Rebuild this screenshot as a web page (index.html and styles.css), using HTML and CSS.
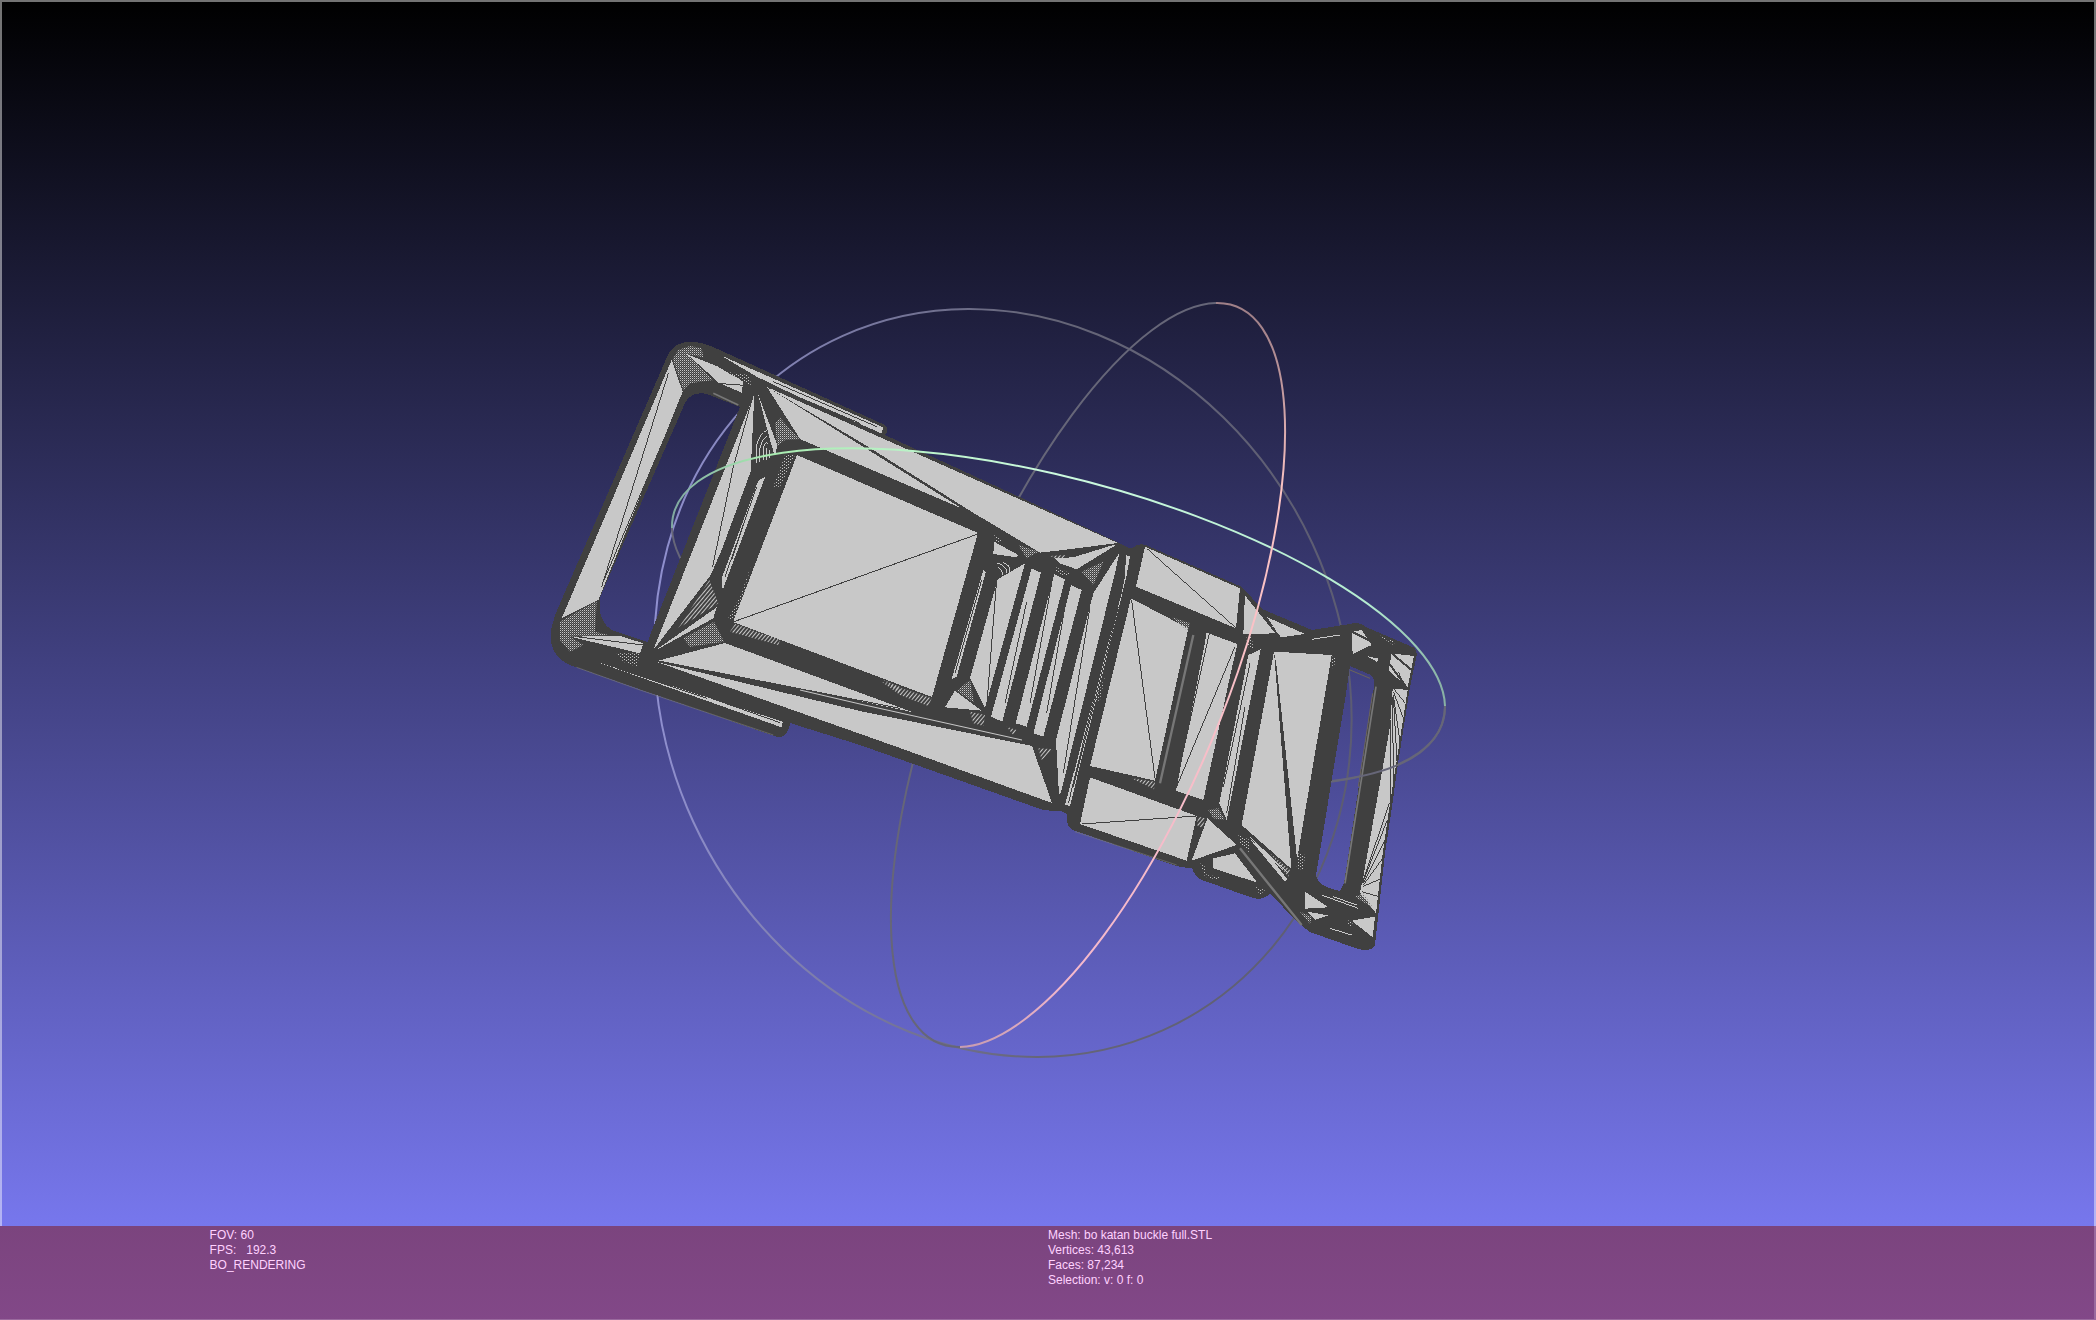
FILE: index.html
```html
<!DOCTYPE html>
<html lang="en">
<head>
    <meta charset="UTF-8">
    <meta name="viewport" content="width=device-width, initial-scale=1.0">
    <title>bo katan buckle full.STL</title>
    <link rel="stylesheet" href="styles.css">
</head>
<body>
    <main class="viewport">
        <svg class="scene" viewBox="0 0 2096 1226" role="img" aria-label="Mesh view">
            <defs>
                <pattern id="dots" width="6" height="6" patternUnits="userSpaceOnUse">
                    <rect width="3" height="3" class="face" />
                    <rect x="3" y="3" width="3" height="3" fill="#707070" />
                </pattern>
                <pattern id="sparse" width="12" height="9" patternUnits="userSpaceOnUse">
                    <rect width="3" height="3" class="face" />
                    <rect x="6" y="3" width="3" height="3" class="face" />
                </pattern>
                <pattern id="hatch" width="9" height="9" patternUnits="userSpaceOnUse" patternTransform="rotate(-50)">
                    <rect width="9" height="3" class="face" />
                </pattern>
                <linearGradient id="circle-line" x1="654" y1="0" x2="1351" y2="0" gradientUnits="userSpaceOnUse">
                    <stop offset="0" stop-color="#9090d0" />
                    <stop offset="0.3" stop-color="#7878a0" />
                    <stop offset="0.55" stop-color="#666678" />
                    <stop offset="1" stop-color="#5c5c72" />
                </linearGradient>
                <linearGradient id="pink-line" x1="960" y1="1047" x2="1216" y2="303" gradientUnits="userSpaceOnUse">
                    <stop offset="0" stop-color="#c89cb0" />
                    <stop offset="0.12" stop-color="#f4b8cc" />
                    <stop offset="0.8" stop-color="#fcc4c4" />
                    <stop offset="1" stop-color="#a08088" />
                </linearGradient>
                <linearGradient id="green-line" x1="672" y1="0" x2="1445" y2="0" gradientUnits="userSpaceOnUse">
                    <stop offset="0" stop-color="#80a8a0" />
                    <stop offset="0.12" stop-color="#a8ecb0" />
                    <stop offset="0.5" stop-color="#ccfadf" />
                    <stop offset="0.9" stop-color="#b4ecd0" />
                    <stop offset="1" stop-color="#88b0a4" />
                </linearGradient>
            </defs>

            <!-- trackball, far side -->
            <g class="ring">
                <path stroke="url(#circle-line)" d="M968 309 A382 339 63 0 1 1038 1057 A382 339 63 0 1 968 309" />
                <path class="far" d="M960 1047 A396 139 -68 0 1 1216 303" />
                <path class="far" d="M1445 706 A398 138 15 0 1 672 528" />
            </g>

            <!-- buckle outline with the two strap slots -->
            <path class="edge" fill-rule="evenodd" d="M667 357 Q674 341 692 342 Q702 342 713 347 L885 425 Q890 431 885 435 L1115 541 L1123 545 Q1130 550 1134 547 Q1140 542 1148 546 L1242 587 L1262 609 L1312 630 L1350 624 Q1358 621 1366 627 L1415 648 L1417 654 L1410 687 L1397 770 L1392 807 L1385 853 L1375 945 Q1371 953 1355 948 L1310 932 L1297 922 L1270 893 Q1263 902 1250 897 L1202 880 Q1195 877 1192 868 Q1184 868 1173 865 L1073 830 Q1065 825 1067 815 Q1064 810 1055 811 L1043 810 L860 745 L790 723 Q788 738 777 737 L570 665 Q548 655 551 630 L555 615 Z
                M740 407 L707 394 Q688 390 682 410 L600 597 Q597 623 614 631 L648 642 L652 630 Z
                M1350 666 L1345 700 L1316 875 Q1317 886 1340 891 L1344 883 L1374 687 Q1375 678 1371 675 Z" />

            <!-- large faces of the main plate -->
            <g class="face">
                <path d="M767 387 L1118 543 L1040 553 L975 514 L800 439 Z" />
                <path d="M797 455 L978 533 L932 697 L733 622 Z" />
                <path d="M657 661 L725 643 L915 713 Z" />
                <path d="M657 662 L860 711 L1032 746 L1052 803 L900 748 Z" />
            </g>
            <path class="edge" d="M767 387 L862 443 L980 517 L974 516 L862 446 Z" />
            <path class="edge" d="M657 661 L860 701 L1034 738 L1032 746 L860 709 Z" />
            <path class="glint" d="M800 690 L860 704 L1022 740" />
            <path class="wire-main" d="M733 622 L978 534" />

            <!-- left loop -->
            <g transform="translate(540 320) scale(0.333333)">
                <g class="face">
                    <path d="M395 120 L428 215 L175 840 L65 895 Z" />
                    <path d="M440 102 L530 138 L610 185 L605 218 L535 188 L500 155 Z" />
                    <path d="M540 105 L1030 322 L1024 340 L800 242 L650 170 Z" />
                    <path d="M643 222 L632 455 L545 690 L510 770 L340 990 Z" />
                    <path d="M655 225 L712 375 L705 410 L690 360 Z" />
                    <path d="M676 470 L655 482 L545 775 L548 810 Z" />
                    <path d="M530 862 L520 895 L340 995 Z" />
                    <path d="M90 950 L240 948 L310 970 L300 1000 Z" />
                    <path d="M160 1022 L728 1205 L725 1222 Z" />
                </g>
                <path class="edge" d="M510 768 L340 990 L345 992 L530 862 Z" />
                <g class="stipple">
                    <path d="M398 118 L415 90 L450 78 L485 85 L490 112 L440 102 L520 180 L450 190 L430 210 Z" />
                    <path d="M705 310 L720 293 L778 358 L735 360 L712 378 Z" />
                    <path d="M60 905 L170 843 L165 935 L205 945 L90 950 L130 975 L90 995 L60 960 Z" />
                    <path d="M522 905 L552 965 L450 980 L430 955 Z" />
                </g>
                <g class="sparse">
                    <path d="M560 155 L625 165 L635 195 L600 185 Z" />
                    <path d="M765 405 L735 405 L700 500 L720 500 Z" />
                    <path d="M632 740 L590 900 L562 900 L600 830 Z" />
                    <path d="M230 1000 L300 1000 L290 1040 L250 1025 Z" />
                </g>
                <g class="hatch">
                    <path d="M508 780 L535 850 L415 925 Z" />
                    <path d="M585 912 L720 960 L715 975 L570 935 Z" />
                    <path d="M1030 1080 L1080 1100 L1080 1120 Z" />
                </g>
                <g class="wires">
                    <path d="M385 160 L185 800 M428 225 L190 785 M530 190 L615 196" />
                    <path d="M640 225 L580 440 L518 740 M625 570 L575 720 M650 500 L555 770" />
                    <path d="M700 185 L1010 320 M760 225 L960 310" />
                    <path d="M110 950 L310 975 M430 1105 L720 1208 M230 1045 L500 1135" />
                    <path d="M350 1022 L1080 1165" />
                </g>
                <g class="glints">
                    <path d="M650 430 V375 Q660 340 680 332 M660 425 V385 Q668 350 682 350 M670 420 V385 Q676 362 684 370 M680 420 V385 M688 415 V390" />
                </g>
                <path class="grey-line" d="M520 220 L595 255" />
                <path class="grey-line thin" d="M110 1042 L300 1110 L700 1245" />
            </g>

            <!-- ribs and the hinge -->
            <g transform="translate(860 420) scale(0.333333)">
                <path class="edge" d="M360 290 L540 398 L520 440 L350 340 Z" />
                <g class="face">
                    <path d="M402 365 L475 405 L470 412 L400 402 Z" />
                    <path d="M413 478 L495 430 L375 865 L330 775 Z" />
                    <path d="M370 450 L377 458 L290 770 L275 778 Z" />
                    <path d="M285 812 L365 872 L255 862 Z" />
                    <path d="M515 445 L543 458 L427 905 L393 890 Z" />
                    <path d="M583 462 L615 478 L500 920 L467 910 Z" />
                    <path d="M633 495 L665 510 L550 950 L520 940 Z" />
                    <path d="M778 398 L766 455 L602 1120 L597 1125 L588 960 L700 520 Z" />
                    <path d="M575 408 L770 374 L650 448 L600 430 Z" />
                    <path d="M798 405 L810 410 L798 475 L630 1158 L615 1155 L785 520 L795 470 Z" />
                </g>
                <path class="edge" d="M540 398 L772 371 L640 412 L570 415 Z" />
                <path class="edge" d="M775 375 L778 398 L700 520 L650 448 Z" />
                <g class="stipple">
                    <path d="M665 455 L730 425 L700 495 Z" />
                    <path d="M290 812 L330 780 L342 848 Z" />
                    <path d="M475 375 L535 395 L500 415 Z" />
                </g>
                <g class="sparse">
                    <path d="M402 345 L425 360 L410 375 Z" />
                    <path d="M585 440 L630 460 L620 470 L585 455 Z" />
                    <path d="M735 770 L720 840 L700 850 Z" />
                </g>
                <g class="hatch">
                    <path d="M65 785 L215 835 L205 858 L120 825 Z" />
                    <path d="M330 875 L375 885 L370 918 L340 910 Z" />
                    <path d="M440 920 L470 930 L460 945 Z" />
                    <path d="M535 985 L580 988 L545 1020 Z" />
                    <path d="M570 408 L620 405 L600 420 Z" />
                </g>
                <g class="wires">
                    <path d="M410 480 L380 860 M365 480 L285 760 M500 545 L435 850 M575 490 L510 850 M620 530 L560 880" />
                    <path d="M690 560 L610 1060 M765 570 L640 1060 M795 410 V470 M775 560 L640 1100 M750 640 L625 1150" />
                </g>
                <path class="glints" d="M412 430 Q440 435 440 460 M415 442 Q428 448 427 465 M430 428 Q452 435 450 455" />
            </g>

            <!-- clasp and right loop -->
            <g transform="translate(1050 520) scale(0.333333)">
                <g class="face">
                    <path d="M285 80 L570 205 L558 325 L258 200 Z" />
                    <path d="M585 222 L685 340 L580 342 Z" />
                    <path d="M652 292 L765 342 L692 352 Z" />
                    <path d="M243 235 L415 325 L315 782 L120 738 Z" />
                    <path d="M470 338 L562 372 L460 840 L378 812 Z" />
                    <path d="M595 405 L632 388 L530 900 L508 850 Z" />
                    <path d="M672 395 L845 405 L740 1025 L722 1045 L575 915 Z" />
                    <path d="M120 772 L440 888 L410 1022 L90 912 Z" />
                    <path d="M472 895 L560 975 L425 1022 Z" />
                    <path d="M490 1015 L555 1000 L622 1088 L490 1045 Z" />
                    <path d="M905 335 L935 330 L965 375 L908 402 Z" />
                    <path d="M1025 400 L1092 408 L1072 505 L1015 455 Z" />
                    <path d="M1028 505 L1073 510 L1020 850 L998 1000 L978 1180 L930 1118 L940 1070 L1020 620 Z" />
                    <path d="M905 1202 L975 1190 L968 1252 Z" />
                    <path d="M765 1115 L835 1162 L765 1166 Z" />
                    <path d="M770 1175 L835 1186 L795 1200 Z" />
                    <path d="M600 958 L650 995 L712 1078 L705 1085 Z" />
                    <path d="M950 408 L985 416 L982 426 Z" />
                </g>
                <path class="edge" d="M672 395 L680 440 L742 1025 L724 1045 Z" />
                <path class="face" d="M672 410 L724 1045 L575 915 Z" />
                <g class="stipple">
                    <path d="M365 292 L420 310 L412 332 Z" />
                    <path d="M475 870 L505 865 L525 900 L490 895 Z" />
                    <path d="M750 1175 L785 1190 L780 1212 Z" />
                    <path d="M915 1130 L940 1120 L970 1165 Z" />
                </g>
                <g class="sparse">
                    <path d="M590 350 L605 350 L610 385 L590 380 Z" />
                    <path d="M565 945 L600 960 L600 1000 L570 970 Z" />
                    <path d="M745 1000 L765 1005 L760 1050 L740 1045 Z" />
                    <path d="M450 1030 L465 1040 L470 1065 L510 1070 L505 1080 L465 1070 Z" />
                    <path d="M615 1100 L645 1110 L630 1125 Z" />
                    <path d="M840 410 L858 410 L850 450 Z" />
                    <path d="M890 1200 L910 1205 L900 1225 Z" />
                    <path d="M985 345 L1035 365 L1030 375 Z" />
                </g>
                <g class="hatch">
                    <path d="M245 775 L315 785 L312 808 Z" />
                    <path d="M445 890 L465 895 L458 925 L440 915 Z" />
                    <path d="M660 1000 L720 1050 L715 1070 Z" />
                </g>
                <g class="wires">
                    <path d="M290 85 L565 330 M245 240 L315 775 M95 912 L440 888" />
                    <path d="M555 380 L380 800 M478 340 L385 760 M465 360 L400 690 M550 430 L462 840 M562 400 L480 760" />
                    <path d="M600 430 L520 800 M585 560 L530 880" />
                    <path d="M585 222 L688 350 M905 335 L960 362" stroke-width="6" />
                    <path d="M1025 400 L1085 450 M1017 430 L1072 505 M1015 455 L1072 505" stroke-width="6" />
                    <path d="M1045 455 L1060 490 M1030 505 L1066 550 M1030 515 L1062 600 M1030 525 L1052 680 M1028 530 L1030 800 M1022 600 V840 M1030 530 L1042 740" />
                    <path d="M938 1085 L1018 850 M938 1088 L1012 900 M940 1090 L1005 960 M940 1095 L998 1015 M938 1100 L995 1075 M935 1115 L988 1130" />
                </g>
                <path class="glints" d="M785 358 L870 345 M815 1125 L925 1165 M850 1130 L920 1155 M840 1225 L905 1245 M600 950 L700 1050 M635 985 L715 1060" />
                <path class="grey-line wide" d="M430 345 L330 790 M570 985 L755 1215" />
                <path class="grey-line" d="M978 500 L885 1090" />
                <path class="brown-line" d="M968 520 L925 800 M900 450 L960 475" />
                <path class="grey-line thin" d="M75 935 L380 1035" />
            </g>

            <!-- trackball, near side -->
            <g class="ring">
                <path class="far" d="M1445 706 Q1444 767 1332 781" />
                <path stroke="url(#green-line)" d="M672 528 A398 138 15 0 1 1445 706" />
                <path stroke="url(#pink-line)" d="M1216 303 A396 139 -68 0 1 960 1047" />
            </g>
        </svg>
    </main>

    <footer class="info-bar">
        <div class="info-column">
            <div>FOV: 60</div>
            <div>FPS:   192.3</div>
            <div>BO_RENDERING</div>
        </div>
        <div class="info-column">
            <div>Mesh: bo katan buckle full.STL</div>
            <div>Vertices: 43,613</div>
            <div>Faces: 87,234</div>
            <div>Selection: v: 0 f: 0</div>
        </div>
    </footer>
</body>
</html>
```
FILE: styles.css
```css
body {
    font-family: "Liberation Sans", Arial, sans-serif;
    background: linear-gradient(#000000, #8080ff);
    display: flex;
    flex-direction: column;
    height: 100vh;
    margin: 0;
    box-shadow: inset 0 0 0 2px rgba(255, 255, 255, 0.45);
}

.viewport {
    flex: 1;
    min-height: 0;
}

.scene {
    display: block;
    width: 100%;
    height: 100%;
}

.edge {
    fill: #404040;
}

.face {
    fill: #c8c8c8;
}

.edge, .face, .wires, .glints {
    shape-rendering: crispEdges;
}

.stipple {
    fill: url(#dots);
}

.sparse {
    fill: url(#sparse);
}

.hatch {
    fill: url(#hatch);
}

.wire-main {
    stroke: #404040;
    stroke-width: 1;
    shape-rendering: crispEdges;
}

.wires {
    fill: none;
    stroke: #404040;
    stroke-width: 3;
}

.glint {
    fill: none;
    stroke: #c8c8c8;
    stroke-width: 1;
}

.glints {
    fill: none;
    stroke: #c8c8c8;
    stroke-width: 3;
}

.grey-line {
    fill: none;
    stroke: #777777;
    stroke-width: 5;
}

.grey-line.wide {
    stroke-width: 7;
}

.grey-line.thin {
    stroke-width: 2;
}

.brown-line {
    fill: none;
    stroke: #6b6558;
    stroke-width: 3;
}

.ring {
    fill: none;
    stroke-width: 2;
}

.far {
    stroke: #666678;
}

.info-bar {
    display: grid;
    grid-template-columns: 4fr 5fr;
    min-height: 92px;
    padding-top: 2px;
    padding-left: 10%;
    background: linear-gradient(#7b447e, #824888);
    box-shadow: inset 0 -1px 0 #9a6a9e, inset -2px 0 0 #9a6a9e;
    color: #ffd2ff;
    font-size: 12px;
    line-height: 15px;
}

.info-column div {
    white-space: pre;
}
```
